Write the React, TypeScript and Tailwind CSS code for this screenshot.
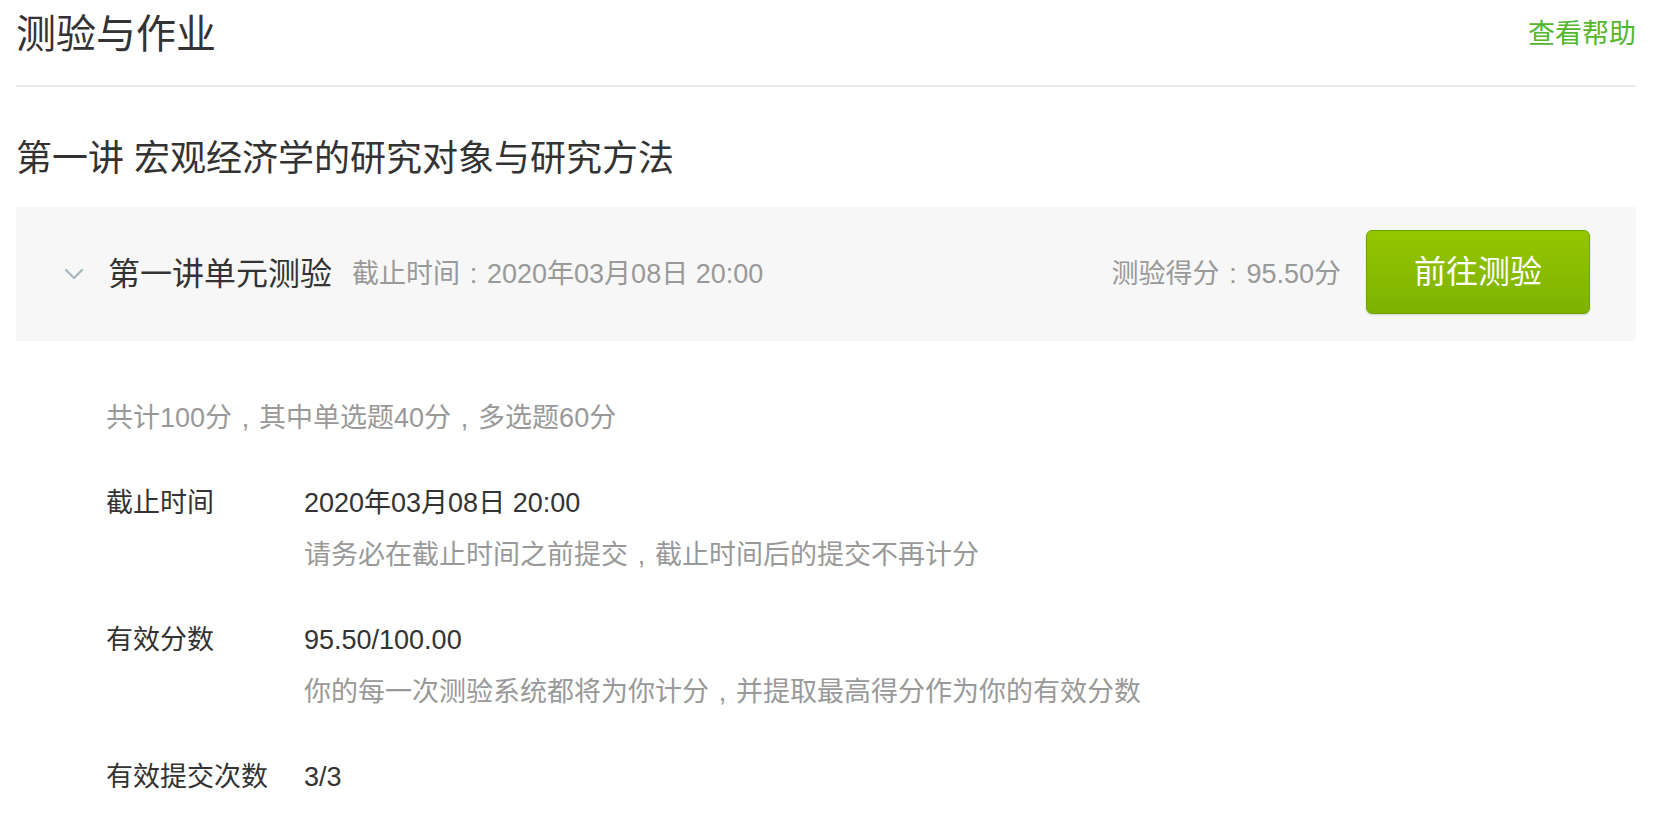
const rows = [
  {
    label: '截止时间',
    value: '2020年03月08日 20:00',
    note: '请务必在截止时间之前提交，截止时间后的提交不再计分',
  },
  {
    label: '有效分数',
    value: '95.50/100.00',
    note: '你的每一次测验系统都将为你计分，并提取最高得分作为你的有效分数',
  },
  { label: '有效提交次数', value: '3/3' },
];

// full-width punctuation sits centred in its em box in the reference
const Txt = ({ children }: { children: string }) => (
  <>
    {children.split(/([：，])/).map((part, i) =>
      part === '：' || part === '，' ? (
        <span key={i} className="inline-block w-[1em] text-center leading-none">
          {part === '：' ? ':' : ','}
        </span>
      ) : (
        part
      ),
    )}
  </>
);

const Chevron = () => (
  <svg width="20" height="12" viewBox="0 0 20 12" className="shrink-0">
    <path d="M2 2 L10 10 L18 2" fill="none" stroke="#a9b7bf" strokeWidth="2.4" strokeLinecap="round" strokeLinejoin="round" />
  </svg>
);

const App = () => {
  return (
    <div className="min-h-screen bg-white pl-[16px] pr-[24px] pt-[4px] font-[family-name:'Liberation_Sans','Noto_Sans_CJK_SC',sans-serif] text-[#333]">
      <header className="flex items-center justify-between border-b-2 border-[#ececec] pb-[21px]">
        <h1 className="text-[40px] leading-[60px]">测验与作业</h1>
        <a className="text-[27px] leading-[40px] text-[#52b72c]">查看帮助</a>
      </header>

      <h2 className="mt-[45px] text-[36px] leading-[54px]">第一讲 宏观经济学的研究对象与研究方法</h2>

      <section className="mt-[21px]">
        <div className="flex h-[134px] items-center bg-[#f7f7f7] pl-[48px] pr-[46px]">
          <Chevron />
          <h3 className="ml-[24px] text-[32px] leading-[48px]">第一讲单元测验</h3>
          <span className="ml-[20px] text-[27px] text-[#999]">
            <Txt>截止时间：2020年03月08日 20:00</Txt>
          </span>
          <span className="ml-auto text-[27px] text-[#999]">
            <Txt>测验得分：95.50分</Txt>
          </span>
          <button className="ml-[25px] mb-[4px] h-[84px] w-[224px] rounded-[6px] border border-[#6ea300] bg-linear-to-b from-[#95c600] to-[#7cb202] text-[32px] text-white shadow-[0_1px_2px_rgba(0,0,0,0.15)]">
            前往测验
          </button>
        </div>

        <div className="pl-[90px] pt-[51px] text-[27px] leading-[52px]">
          <p className="text-[#999]">
            <Txt>共计100分，其中单选题40分，多选题60分</Txt>
          </p>
          {rows.map((r) => (
            <div key={r.label} className="mt-[33px] flex">
              <div className="w-[198px] shrink-0">{r.label}</div>
              <div>
                <div>{r.value}</div>
                {r.note && (
                  <div className="text-[#999]">
                    <Txt>{r.note}</Txt>
                  </div>
                )}
              </div>
            </div>
          ))}
        </div>
      </section>
    </div>
  );
};

export default App;
